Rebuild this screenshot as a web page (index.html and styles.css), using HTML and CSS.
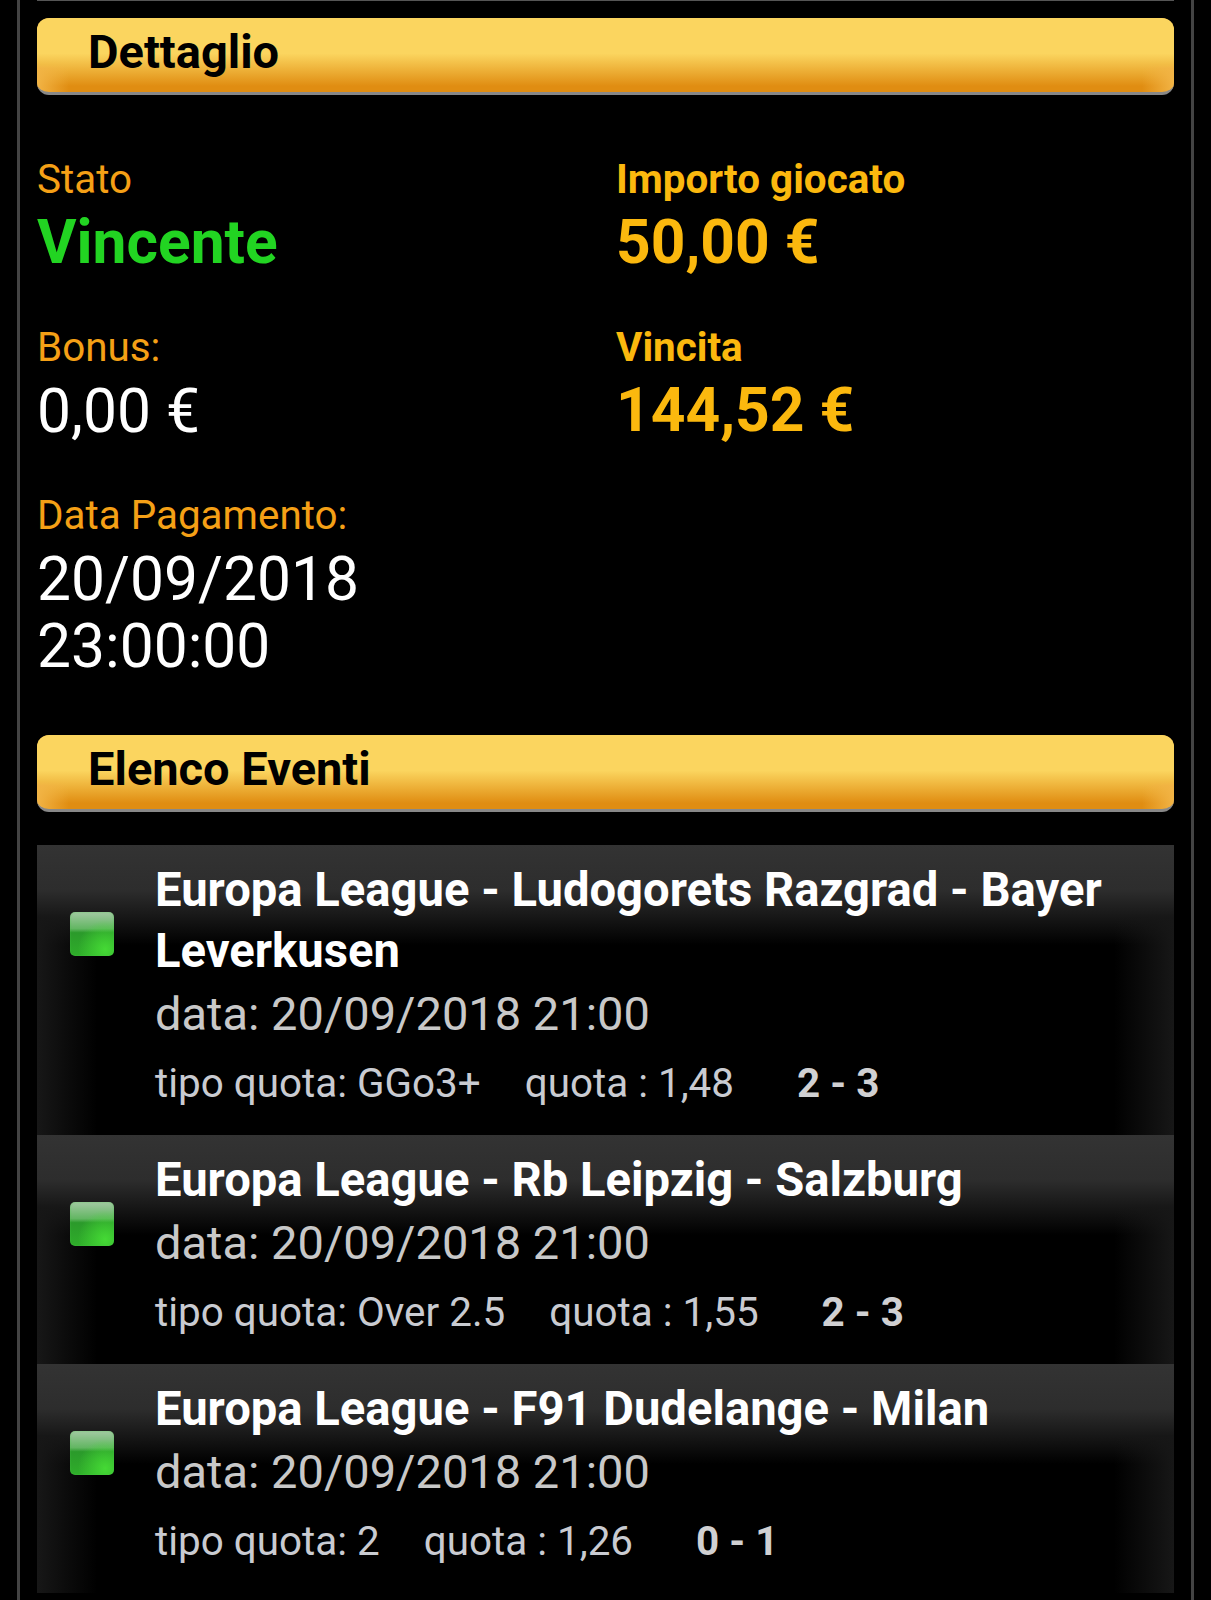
FILE: index.html
```html
<!DOCTYPE html>
<html lang="it">
<head>
    <meta charset="UTF-8">
    <title>Dettaglio</title>
    <link rel="stylesheet" href="styles.css">
</head>
<body>
    <div class="container">
        <h2 class="bar">Dettaglio</h2>
        <div class="details">
            <div class="cell">
                <div class="label">Stato</div>
                <div class="value win">Vincente</div>
            </div>
            <div class="cell">
                <div class="label strong">Importo giocato</div>
                <div class="value money">50,00 €</div>
            </div>
            <div class="cell">
                <div class="label">Bonus:</div>
                <div class="value">0,00 €</div>
            </div>
            <div class="cell">
                <div class="label strong">Vincita</div>
                <div class="value money">144,52 €</div>
            </div>
            <div class="cell">
                <div class="label">Data Pagamento:</div>
                <div class="value">20/09/2018<br>23:00:00</div>
            </div>
        </div>
        <h2 class="bar">Elenco Eventi</h2>
        <ul class="events">
            <li class="event">
                <span class="led"></span>
                <div class="info">
                    <div class="title">Europa League - Ludogorets Razgrad - Bayer Leverkusen</div>
                    <div class="date">data: 20/09/2018 21:00</div>
                    <div class="odds"><span>tipo quota: GGo3+</span><span>quota : 1,48</span><b>2 - 3</b></div>
                </div>
            </li>
            <li class="event">
                <span class="led"></span>
                <div class="info">
                    <div class="title">Europa League - Rb Leipzig - Salzburg</div>
                    <div class="date">data: 20/09/2018 21:00</div>
                    <div class="odds"><span>tipo quota: Over 2.5</span><span>quota : 1,55</span><b>2 - 3</b></div>
                </div>
            </li>
            <li class="event">
                <span class="led"></span>
                <div class="info">
                    <div class="title">Europa League - F91 Dudelange - Milan</div>
                    <div class="date">data: 20/09/2018 21:00</div>
                    <div class="odds"><span>tipo quota: 2</span><span>quota : 1,26</span><b>0 - 1</b></div>
                </div>
            </li>
        </ul>
    </div>
</body>
</html>
```

FILE: styles.css
```css
html, body {
    margin: 0;
    background: #000;
}
body {
    font-family: Roboto, "Liberation Sans", sans-serif;
    height: 1600px;
    overflow: hidden;
    color: #fff;
}
.container {
    width: 1177px;
    height: 1600px;
    box-sizing: border-box;
    margin-left: 17px;
    padding: 18px 17px 0;
    border-left: 3px solid #444;
    border-right: 3px solid #444;
    position: relative;
}
.container::before {
    content: "";
    position: absolute;
    top: 0;
    left: 17px;
    right: 17px;
    height: 1px;
    background: #555;
}
.bar {
    margin: 0;
    height: 74px;
    padding-left: 51px;
    border-radius: 12px;
    border-bottom: 3px solid #888;
    background:
        linear-gradient(90deg, #f2b445, rgba(0, 0, 0, 0) 32px),
        linear-gradient(270deg, #f2b445, rgba(0, 0, 0, 0) 32px),
        linear-gradient(#fbd55f 0%, #fbd55f 48%, #e08d12 92%, #e08d12 100%);
    background-blend-mode: lighten, lighten, normal;
    color: #000;
    font-size: 47px;
    font-weight: 700;
    line-height: 67px;
}
.details {
    display: grid;
    grid-template-columns: 579px 1fr;
    grid-auto-rows: 168px;
    padding-top: 63px;
    height: 640px;
    box-sizing: border-box;
}
.label {
    color: #f5a016;
    font-size: 40.4px;
    line-height: 44px;
}
.label.strong {
    color: #fbb80e;
    font-weight: 700;
}
.value {
    font-size: 60.5px;
    line-height: 67px;
    margin-top: 8px;
}
.win {
    color: #22d422;
    font-weight: 700;
    margin-top: 7px;
}
.money {
    color: #fbb80e;
    font-weight: 700;
    margin-top: 7px;
}
.events {
    list-style: none;
    margin: 33px 0 0;
    padding: 0;
}
.event {
    display: flex;
    align-items: flex-start;
    padding: 15px 30px 13px 33px;
    background:
        linear-gradient(90deg, #171717, rgba(0, 0, 0, 0) 60px),
        linear-gradient(270deg, #171717, rgba(0, 0, 0, 0) 60px),
        linear-gradient(#333 0, #2d2d2d 45px, #1f1f1f 62px, #000 100px);
    background-blend-mode: lighten, lighten, normal;
}
.led {
    flex: none;
    width: 44px;
    height: 44px;
    margin: 52px 41px 0 0;
    border-radius: 5px;
    box-shadow: inset 0 0 2px rgba(70, 200, 70, 0.7);
    background:
        radial-gradient(ellipse at 80% 85%, #45d935 0, rgba(69, 217, 53, 0) 55%),
        linear-gradient(#a3c9a3 0%, #62b662 38%, #2b9a2b 47%, #2fae2a 100%);
}
.info {
    flex: 1;
}
.title {
    font-size: 47.2px;
    font-weight: 700;
    line-height: 61px;
}
.date {
    font-size: 47px;
    line-height: 64px;
    color: #c8c8c8;
}
.odds {
    display: flex;
    font-size: 40.4px;
    line-height: 76px;
    color: #c9cbd1;
}
.odds span {
    margin-right: 44px;
}
.odds span + span {
    margin-right: 63px;
}
.odds b {
    font-weight: 700;
    color: #d0d0d2;
}
```
